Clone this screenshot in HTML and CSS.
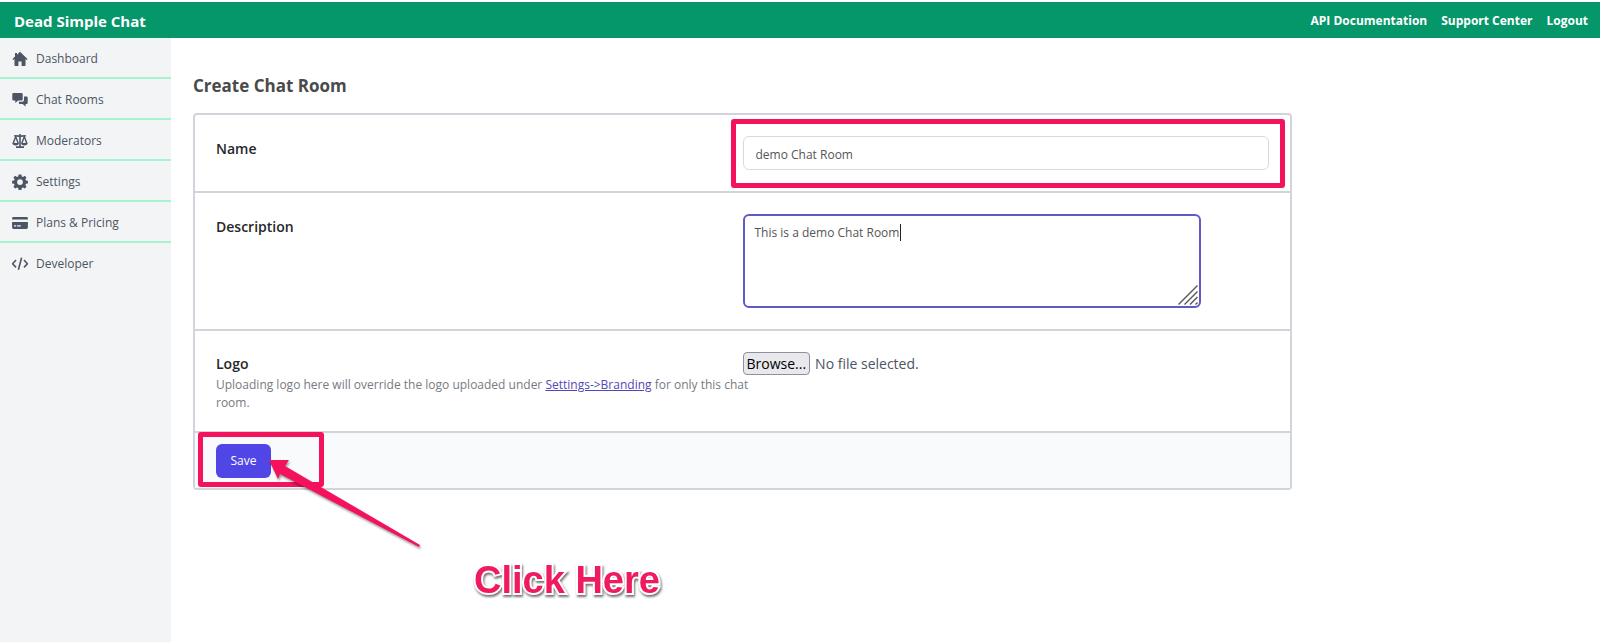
FILE: index.html
```html
<!DOCTYPE html>
<html lang="en">
<head>
<meta charset="utf-8">
<meta name="viewport" content="width=device-width, initial-scale=1">
<title>Dead Simple Chat</title>
<link rel="stylesheet" href="styles.css">
</head>
<body>
<header class="topbar">
  <a class="brand" href="#">Dead Simple Chat</a>
  <nav class="toplinks">
    <a href="#">API Documentation</a>
    <a href="#">Support Center</a>
    <a href="#">Logout</a>
  </nav>
</header>
<div class="layout">
  <nav class="sidebar">
    <a href="#"><svg viewBox="0 0 16 16"><path d="M8 .8 15.5 8l-.8 1-1.200-1v6.200q0 .8-.8.8H9.600v-4.600H6.400V15H3.300q-.8 0-.8-.8V8l-1.200 1-.8-1L3 5.500V2h2v1.700z"/></svg>Dashboard</a>
    <a href="#"><svg viewBox="0 0 16 16"><path d="M1.500 1h8q1.200 0 1.200 1.200v5q0 1.200-1.200 1.200H6.200L3.300 11V8.400H1.500Q.3 8.400.3 7.200v-5Q.3 1 1.500 1z"/><path d="M12 4.500h2.500q1.200 0 1.200 1.200v5q0 1.200-1.200 1.200h-.9v2.600l-3-2.600H8q-1.200 0-1.200-1.200V9.700h3.400q1.800 0 1.800-1.800z"/></svg>Chat Rooms</a>
    <a href="#"><svg viewBox="0 0 16 16"><path d="M7.200 1h1.600v1.200L13.800 2v1.400L8.800 4v9.300H12V15H4v-1.700h3.200V4l-5-.6V2l5 .2z"/><path fill-rule="evenodd" d="M3.200 3h1L7 10.500Q6.400 12.500 3.700 12.500T.3 10.500zM3.700 5.500 2.100 10h3.200zM11.800 3h1l2.900 7.500q-.7 2-3.400 2T9 10.500zm.5 2.500L10.700 10h3.200z"/></svg>Moderators</a>
    <a href="#"><svg viewBox="0 0 16 16"><path fill-rule="evenodd" d="M6.600.4h2.800l.4 2 1.200.5 1.700-1.200 1.800 1.900-1.100 1.700.5 1.200 2 .3v2.600l-2 .4-.5 1.200 1.100 1.700-1.800 1.900-1.700-1.200-1.200.5-.4 2H6.600l-.4-2L5 13.400l-1.700 1.200-1.900-1.900L2.600 11l-.5-1.200-2-.4V6.800l2-.3.5-1.200-1.200-1.700 1.900-1.900L5 2.900l1.200-.5zM8 5.200a2.900 2.900 0 1 0 0 5.800 2.900 2.900 0 0 0 0-5.800z"/></svg>Settings</a>
    <a href="#"><svg viewBox="0 0 16 16"><path d="M1.500 2h13q1.400 0 1.400 1.400v1.200H.1V3.400Q.1 2 1.500 2z"/><path fill-rule="evenodd" d="M.1 7h15.800v5.600q0 1.400-1.400 1.400h-13Q.1 14 .1 12.600zM2 10.200v1.400h2.200v-1.400zm3.200 0v1.400h3.600v-1.400z"/></svg>Plans &amp; Pricing</a>
    <a href="#"><svg viewBox="0 0 16 16"><path class="stroke" d="M4 4 .6 7.700 4 11.400M12 4l3.400 3.700L12 11.400M9.600 1.800 6.400 13.800"/></svg>Developer</a>
  </nav>
  <main class="content">
    <h1>Create Chat Room</h1>
    <form class="card">
      <div class="row">
        <label class="name" for="room-name">Name</label>
        <div class="field">
          <input class="text" id="room-name" type="text" value="demo Chat Room">
          <span class="mark mark-name"></span>
        </div>
      </div>
      <div class="row">
        <label class="name" for="room-desc">Description</label>
        <div class="field area">
          <textarea class="text" id="room-desc">This is a demo Chat Room</textarea>
          <span class="caret"></span>
          <svg class="grip" viewBox="0 0 20 20"><path d="M.5 19.500 19.500.5M6.500 19.500l13-13M12 19.500l7.500-7.500M17.500 19.500l2-2"/></svg>
        </div>
      </div>
      <div class="row">
        <div>
          <div class="name">Logo</div>
          <p class="hint">Uploading logo here will override the logo uploaded under <a href="#">Settings-&gt;Branding</a> for only this chat room.</p>
        </div>
        <div class="field">
          <input class="file-input" id="logo" type="file">
          <label class="file" for="logo"><span class="browse">Browse...</span>No file selected.</label>
        </div>
      </div>
      <div class="actions">
        <button class="save" type="button">Save</button>
        <span class="mark mark-save"></span>
        <svg class="arrow" viewBox="0 0 156 92"><path d="M1 2 21 2 17 8 152 87 151 89 12 16 10 21z"/></svg>
        <span class="callout">Click Here</span>
      </div>
    </form>
  </main>
</div>
</body>
</html>
```
FILE: styles.css
```css
* { box-sizing: border-box; }
body {
  margin: 0;
  min-height: 100vh;
  display: flex;
  flex-direction: column;
  padding-top: 2px;
  background: #fff;
  color: #4b5563;
  font: 12px/18px "Open Sans", "Noto Sans", sans-serif;
}
.topbar {
  display: flex;
  align-items: center;
  justify-content: space-between;
  height: 36px;
  padding: 2px 12px 0 14px;
  background: #059669;
}
.topbar a { color: #fff; font-weight: 700; text-decoration: none; }
.topbar .brand { font-size: 15px; }
.toplinks { display: flex; gap: 14px; }
.layout { flex: 1; display: flex; }
.sidebar { width: 171px; flex: none; background: #f3f4f6; }
.sidebar a {
  display: flex;
  align-items: center;
  gap: 8px;
  height: 41px;
  padding: 2px 0 0 12px;
  border-bottom: 2px solid #a7f3d0;
  color: #4b5563;
  font-weight: 500;
  text-decoration: none;
}
.sidebar a:last-child { border-bottom-color: transparent; }
.sidebar svg { width: 16px; height: 16px; fill: #4b5563; }
.sidebar .stroke { fill: none; stroke: #4b5563; stroke-width: 1.6; }
.content { flex: 1; min-width: 0; padding: 36px 22px; }
h1 {
  margin: 0 0 15px;
  color: #4a4a4a;
  font-size: 17px;
  line-height: 24px;
  font-weight: 700;
}
.card {
  max-width: 1099px;
  border: 2px solid #d1d5db;
  border-radius: 4px;
}
.row {
  display: grid;
  grid-template-columns: 1fr 1fr;
  padding: 21px;
  border-bottom: 2px solid #d1d5db;
}
.name { color: #27272a; font-size: 14px; line-height: 26px; font-weight: 600; }
div.name { line-height: 24px; }
.field { position: relative; }
.text {
  display: block;
  width: 100%;
  height: 34px;
  padding: 2px 12px 0;
  border: 1px solid #d8dade;
  border-radius: 6px;
  outline: none;
  background: #fff;
  color: #555;
  font: inherit;
}
.area { max-width: 458px; }
textarea.text {
  height: 94px;
  padding: 8px 10px;
  border: 2px solid #6259c8;
  resize: none;
}
.caret {
  position: absolute;
  top: 10px;
  left: 157px;
  width: 1px;
  height: 17px;
  background: #222;
}
.grip {
  position: absolute;
  right: 3px;
  bottom: 3px;
  width: 20px;
  height: 20px;
  fill: none;
  stroke: #555;
  stroke-width: 1.4;
}
.hint { margin: 0 -12px -2px 0; color: #777b82; }
.hint a { color: #5148b5; }
.file-input { position: absolute; width: 1px; height: 1px; opacity: 0; }
.file { display: flex; align-items: center; gap: 5px; font-size: 14px; }
.browse {
  padding: 0 3px;
  border: 1px solid #8f8f9d;
  border-radius: 4px;
  background: #e9e9ed;
  color: #000;
  line-height: 21px;
}
.actions { position: relative; padding: 11px 21px 10px; background: #f9fafb; }
.save {
  display: block;
  min-width: 55px;
  height: 34px;
  padding: 0 14px;
  border: 0;
  border-radius: 6px;
  background: #4f46e5;
  color: #fff;
  font: inherit;
}
.mark {
  position: absolute;
  border: 5px solid #f5125d;
  border-radius: 3px;
  pointer-events: none;
}
.mark-name { inset: -17px -16px -18px -12px; }
.mark-save { top: -1px; left: 3px; width: 126px; height: 55px; }
.arrow {
  position: absolute;
  top: 25px;
  left: 73px;
  width: 156px;
  height: 92px;
  fill: #f5125d;
  filter: drop-shadow(1px 2px 1px rgba(0, 0, 0, .4));
}
.callout {
  position: absolute;
  top: 127px;
  left: 279px;
  color: #f01a5f;
  font: 700 38px/40px "Liberation Sans", Arial, sans-serif;
  white-space: nowrap;
  paint-order: stroke fill;
  -webkit-text-stroke: 4px #fff;
  filter: drop-shadow(1px 2px 1px rgba(0, 0, 0, .55));
}
```
